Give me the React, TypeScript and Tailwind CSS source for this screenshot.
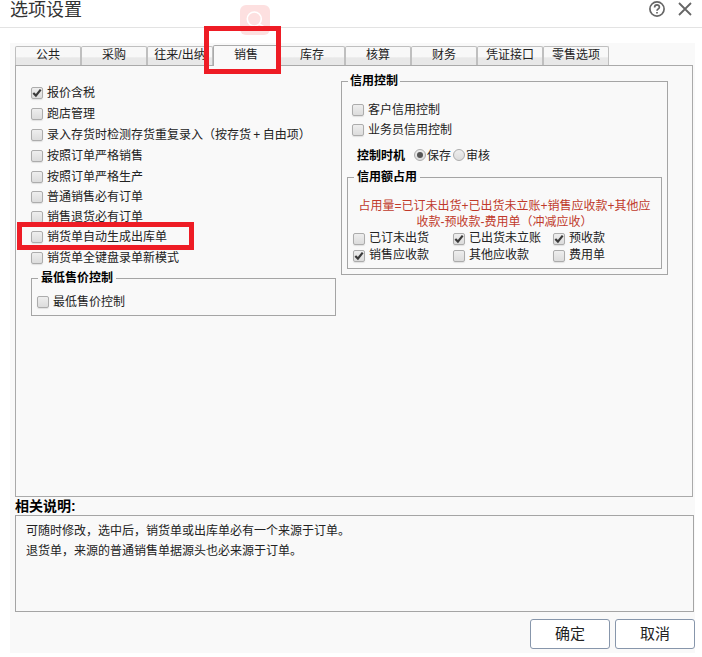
import React from "react";

const tabs = ["公共", "采购", "往来/出纳", "销售", "库存", "核算", "财务", "凭证接口", "零售选项"];

const options = [
  { label: "报价含税", checked: true, height: "h-[21px]" },
  { label: "跑店管理", height: "h-[21px]" },
  { label: "录入存货时检测存货重复录入（按存货 + 自由项）", height: "h-[21px]" },
  { label: "按照订单严格销售", height: "h-[21px]" },
  { label: "按照订单严格生产", height: "h-[20px]" },
  { label: "普通销售必有订单", height: "h-[20px]" },
  { label: "销售退货必有订单", height: "h-[20px]" },
  { label: "销货单自动生成出库单", height: "h-[21px]", marked: true },
  { label: "销货单全键盘录单新模式", height: "h-[20px]" },
];

const Checkbox = ({ label, checked }: { label: string; checked?: boolean }) => {
  return (
    <label className="flex items-center gap-[4px] whitespace-nowrap">
      <span className="flex h-[12px] w-[12px] shrink-0 items-center justify-center rounded-[2px] border border-[#acacac] bg-linear-to-b from-[#eeeeee] to-[#dcdcdc] shadow-[0_1px_1px_#e0e0e0]">
        {checked && (
          <svg className="h-[10px] w-[10px] shrink-0" viewBox="0 0 10 10" fill="none">
            <path d="M1.3 5 L3.9 7.6 L8.7 1.6" stroke="#3a3a3a" strokeWidth="2.2" />
          </svg>
        )}
      </span>
      <span className="[word-spacing:-1px]">{label}</span>
    </label>
  );
};

const Radio = ({ label, checked }: { label: string; checked?: boolean }) => {
  return (
    <label className="flex items-center gap-[1px]">
      <span className="mb-[2px] flex h-[12px] w-[12px] items-center justify-center rounded-full border border-[#acacac] bg-linear-to-b from-[#eeeeee] to-[#dcdcdc]">
        {checked && <span className="h-[6px] w-[6px] rounded-full bg-[#555555]" />}
      </span>
      <span>{label}</span>
    </label>
  );
};

export default function App() {
  return (
    <div className="relative h-[657px] w-[702px] overflow-hidden bg-white font-['Liberation_Sans','Noto_Sans_CJK_SC',sans-serif] text-[12px] leading-[20px] text-[#222222]">
      <div className="flex h-[28px] items-start justify-between border-b border-[#e3e3e3] pr-[10px] pl-[10px]">
        <h1 className="text-[18px] leading-[21px] text-[#333333]">选项设置</h1>
        <div className="flex gap-[13px] pt-[1px]">
          <svg width="16" height="16" viewBox="0 0 16 16" fill="none" stroke="#666666" strokeWidth="1.7">
            <circle cx="8" cy="8" r="7.1" />
            <path d="M5.6 6.4 C5.6 3.1 10.5 3.2 10.4 6.2 C10.3 7.8 8 7.9 8 9.8 M8 10.9 V12.4" />
          </svg>
          <svg width="14" height="16" viewBox="0 0 14 16" fill="none" stroke="#666666" strokeWidth="1.8">
            <path d="M1 2 L13 14 M13 2 L1 14" />
          </svg>
        </div>
      </div>

      <div className="mt-[15px] ml-[10px] h-[610px] w-[685px] bg-[#f9f9f9] pt-[2px] pl-[5px]">
        <div className="flex h-[20px] items-end">
          {tabs.map((tab, index) => (
            <div
              key={tab}
              className={
                index === 3
                  ? "relative -mb-px h-[21px] w-[66px] shrink-0 rounded-t-[2px] border border-b-0 border-[#aaaaaa] bg-[#f9f9f9] text-center leading-[18px]"
                  : "h-[19px] w-[66px] shrink-0 rounded-t-[2px] border border-b-0 border-[#bfbfbf] bg-linear-to-b from-[#f8f8f8] from-55% to-[#e8e8e8] to-60% text-center leading-[17px]"
              }
            >
              {tab}
            </div>
          ))}
        </div>

        <div className="flex h-[432px] w-[678px] border border-[#aaaaaa]">
          <div className="w-[325px] shrink-0 pt-[17px] pl-[15px]">
            {options.map((option) => (
              <div key={option.label} className={`relative ${option.height}`}>
                <Checkbox label={option.label} checked={option.checked} />
                {option.marked && (
                  <div className="absolute -top-[5px] -left-[14px] h-[28px] w-[177px] border-[5px] border-[#ee1c25]" />
                )}
              </div>
            ))}
            <fieldset className="h-[48px] w-[305px] border border-[#a5a5a5] pl-[5px]">
              <legend className="ml-[1px] h-[20px] px-[3px] font-bold text-black">最低售价控制</legend>
              <div className="pt-[4px]">
                <Checkbox label="最低售价控制" />
              </div>
            </fieldset>
          </div>

          <fieldset className="mt-[5px] h-[204px] w-[327px] border border-[#a5a5a5] px-[5px]">
            <legend className="ml-[1px] h-[20px] px-[2px] font-bold text-black">信用控制</legend>
            <div className="pt-[9px] pl-[5px]">
              <Checkbox label="客户信用控制" />
              <Checkbox label="业务员信用控制" />
            </div>
            <div className="mt-[6px] flex h-[20px] items-center pl-[10px]">
              <span className="mr-[9px] font-bold text-black">控制时机</span>
              <Radio label="保存" checked />
              <span className="w-[2px]" />
              <Radio label="审核" />
            </div>
            <fieldset className="mt-px h-[102px] w-[315px] border border-[#a5a5a5] px-[5px]">
              <legend className="ml-[1px] h-[20px] px-[3px] font-bold text-black">信用额占用</legend>
              <div className="pt-[11px] text-center leading-[16px] text-[#c0392b]">
                占用量=已订未出货+已出货未立账+销售应收款+其他应
                <br />
                收款-预收款-费用单（冲减应收）
              </div>
              <div className="grid grid-cols-[100px_100px_100px] leading-[17px]">
                <Checkbox label="已订未出货" />
                <Checkbox label="已出货未立账" checked />
                <Checkbox label="预收款" checked />
                <Checkbox label="销售应收款" checked />
                <Checkbox label="其他应收款" />
                <Checkbox label="费用单" />
              </div>
            </fieldset>
          </fieldset>
        </div>

        <div className="h-[18px] text-[14px] leading-[18px] font-bold text-black">相关说明:</div>
        <div className="h-[97px] w-[679px] border border-[#a5a5a5] px-[10px] pt-[5px]">
          <p>可随时修改，选中后，销货单或出库单必有一个来源于订单。</p>
          <p>退货单，来源的普通销售单据源头也必来源于订单。</p>
        </div>
        <div className="mt-[7px] flex justify-end gap-[5px] text-[15px] text-[#222222]">
          <button className="h-[30px] w-[80px] rounded-[3px] border border-[#8796ab] bg-white">确定</button>
          <button className="h-[30px] w-[80px] rounded-[3px] border border-[#8796ab] bg-white">取消</button>
        </div>
      </div>

      <div className="absolute top-[5px] left-[240px] flex h-[30px] w-[30px] items-center justify-center rounded-[6px] bg-[#fde0e0]">
        <svg width="20" height="20" viewBox="0 0 20 20" fill="none" stroke="#ffffff" strokeWidth="1.6">
          <circle cx="9.3" cy="9" r="7" />
          <path d="M14.2 14 L18.5 16.5" />
        </svg>
      </div>
      <div className="absolute top-[26px] left-[204px] h-[48px] w-[77px] border-[5px] border-[#ee1c25]" />
    </div>
  );
}
